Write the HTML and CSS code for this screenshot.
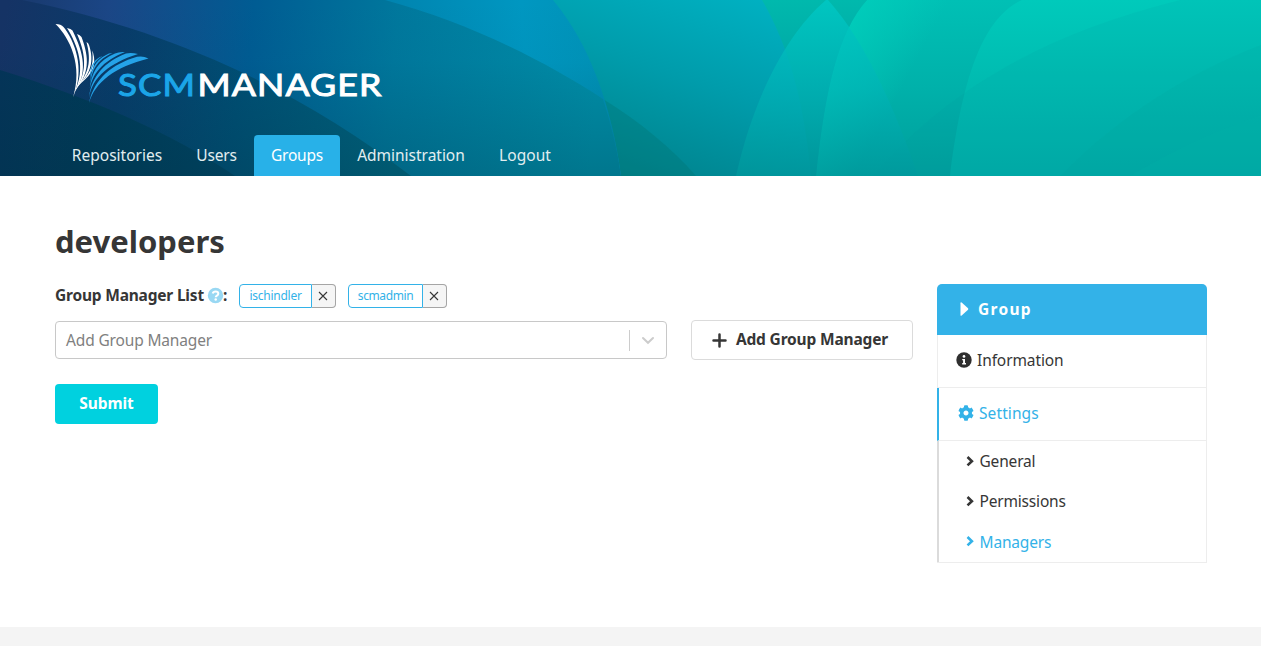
FILE: index.html
```html
<!DOCTYPE html>
<html lang="en">
<head>
<meta charset="utf-8">
<title>SCM-Manager - developers</title>
<link rel="stylesheet" href="styles.css">
</head>
<body>
<header class="hero">
  <svg class="hero-art" viewBox="0 0 1261 176" preserveAspectRatio="none" aria-hidden="true">
    <defs>
      <linearGradient id="g-right" x1="0" y1="0" x2="0" y2="1"><stop offset="0" stop-color="#00cabb"/><stop offset=".5" stop-color="#00bab0"/><stop offset="1" stop-color="#00aba7"/></linearGradient>
      <linearGradient id="g-h" x1="0" y1="0" x2="0" y2="1"><stop offset="0" stop-color="#00c0b5"/><stop offset=".5" stop-color="#00b1aa"/><stop offset="1" stop-color="#009e9c"/></linearGradient>
      <linearGradient id="g-hl" gradientUnits="userSpaceOnUse" x1="860" y1="10" x2="925" y2="45"><stop offset="0" stop-color="#00d0bc" stop-opacity=".7"/><stop offset="1" stop-color="#00d0bc" stop-opacity="0"/></linearGradient>
      <linearGradient id="g-g" x1="0" y1="0" x2="0" y2="1"><stop offset="0" stop-color="#00b9ad"/><stop offset=".5" stop-color="#00a3a4"/><stop offset="1" stop-color="#008b92"/></linearGradient>
      <linearGradient id="g-e" gradientUnits="userSpaceOnUse" x1="740" y1="-20" x2="670" y2="190"><stop offset="0" stop-color="#00b3c4"/><stop offset=".5" stop-color="#009cab"/><stop offset="1" stop-color="#00828c"/></linearGradient>
      <linearGradient id="g-f" x1="0" y1="0" x2="0" y2="1"><stop offset="0" stop-color="#00c8c4" stop-opacity=".85"/><stop offset=".5" stop-color="#00b4b7" stop-opacity=".65"/><stop offset="1" stop-color="#00999d" stop-opacity=".7"/></linearGradient>
      <linearGradient id="g-d" gradientUnits="userSpaceOnUse" x1="380" y1="40" x2="600" y2="20"><stop offset="0" stop-color="#0082ae"/><stop offset=".65" stop-color="#0097c1"/><stop offset="1" stop-color="#0093b8"/></linearGradient>
      <linearGradient id="g-band" gradientUnits="userSpaceOnUse" x1="0" y1="0" x2="600" y2="60"><stop offset="0" stop-color="#183769"/><stop offset=".18" stop-color="#1b4686"/><stop offset=".42" stop-color="#005c93"/><stop offset=".66" stop-color="#00789d"/><stop offset="1" stop-color="#008fa9"/></linearGradient>
      <linearGradient id="g-a" gradientUnits="userSpaceOnUse" x1="0" y1="50" x2="400" y2="110"><stop offset="0" stop-color="#153365"/><stop offset=".3" stop-color="#083c6a"/><stop offset=".6" stop-color="#004f75"/><stop offset="1" stop-color="#00657f"/></linearGradient>
      <linearGradient id="g-b" gradientUnits="userSpaceOnUse" x1="0" y1="120" x2="230" y2="120"><stop offset="0" stop-color="#043459"/><stop offset=".4" stop-color="#003a58"/><stop offset="1" stop-color="#004464"/></linearGradient>
      <linearGradient id="g-dark" x1="0" y1="0" x2="0" y2="1"><stop offset="0" stop-color="#003544" stop-opacity="0"/><stop offset=".35" stop-color="#003544" stop-opacity=".03"/><stop offset="1" stop-color="#003544" stop-opacity=".27"/></linearGradient>
    </defs>
    <rect width="1261" height="176" fill="url(#g-right)"/>
    <path d="M1261 45C1190 72 1120 115 1060 176H1261Z" fill="#009a97" opacity=".1"/>
    <path d="M1261 115Q1190 140 1130 176H1261Z" fill="#00c0b0" opacity=".12"/>
    <path d="M1022 0C982 18 962 80 950 176H0V0Z" fill="url(#g-h)"/>
    <path d="M1180 0C1040 35 945 92 873 176H1261V0Z" fill="#00959a" opacity=".1"/>
    <path d="M867 0C838 32 825 90 816 176H1000V0Z" fill="url(#g-hl)"/>
    <path d="M867 0C838 32 825 90 816 176H0V0Z" fill="url(#g-g)"/>
    <path d="M762 0C790 48 804 104 811 176H0V0Z" fill="url(#g-e)"/>
    <path d="M826 0C785 35 753 100 736 176H918C896 112 866 42 828 0Z" fill="url(#g-f)"/>
    <path d="M603 99C640 122 672 148 696 176H610Z" fill="#00706e" opacity=".3"/>
    <path d="M553 0C590 44 612 108 621 176H0V0Z" fill="url(#g-d)"/>
    <path d="M0 0H385C466 22 540 58 603 99Q616 140 621 176H0Z" fill="url(#g-band)"/>
    <path d="M0 0H22C170 30 300 90 411 176H0Z" fill="url(#g-a)"/>
    <path d="M0 70C90 98 170 132 235 176H0Z" fill="url(#g-b)"/>
    <path d="M0 0H553C590 44 612 108 621 176H0Z" fill="url(#g-dark)"/>
  </svg>
  <div class="hero-inner">
    <svg class="logo" width="330" height="84" viewBox="54 21 330 84" role="img" aria-label="SCM-Manager">
      <g fill="#fff">
        <path d="M55.500 24Q61 24 63.500 27C74 40 86 68 73 97.500C83 66 70 38 55.500 24Z"/>
        <path d="M67 28Q71 28.500 72.500 30.500C80 46 91 70 74 93C87 68 77 44 67 28Z"/>
        <path d="M77 34Q80 35 81.500 37C87 52 92.500 71 75 90.500C89.500 70 84 50 77 34Z"/>
        <path d="M86.500 42Q88.500 43 89 45C92.500 56 95 71 76 88C92 71 90 56 86.500 42Z"/>
        <path d="M92.200 50.500Q93.500 53 94 57C95 66 93 75 77 86C93 73 93.500 62 92.200 50.500Z"/>
      </g>
      <g fill="#25a3e8">
        <path d="M89 103C95 82 115 67 148.500 58.500Q143 55.500 137 56.800C112 64 94 79 89 103Z"/>
        <path d="M89 98C92 77 110 63 138 54Q131 52.200 126 53.500C106 61 91 76 89 98Z"/>
        <path d="M89.500 92C91 74 103 61 125 52Q119 51.500 115 53.500C99 60 90.500 72 89.500 92Z"/>
        <path d="M90.500 86C91 70 97 60 112.500 53Q108.500 53 106 55C95 61 90 69 90.500 86Z"/>
        <path d="M90.500 79C90.500 68 94.500 61 102.500 56Q99 57 97 59C92 63 89.500 69 90.500 79Z"/>
      </g>
      <text class="logo-text logo-scm" x="118" y="96" textLength="78" lengthAdjust="spacingAndGlyphs">SCM</text>
      <text class="logo-text" x="197.500" y="96" textLength="185" lengthAdjust="spacingAndGlyphs">MANAGER</text>
    </svg>
    <nav class="tabs">
      <a class="tab t-repos">Repositories</a>
      <a class="tab t-users">Users</a>
      <a class="tab t-groups is-active">Groups</a>
      <a class="tab t-admin">Administration</a>
      <a class="tab t-logout">Logout</a>
    </nav>
  </div>
</header>
<main class="page">
  <h1 class="title">developers</h1>
  <div class="columns">
    <section class="main">
      <div class="managers">
        <span class="label">Group Manager List</span>
        <svg class="help" width="16" height="16" viewBox="0 0 16 16"><circle cx="7.500" cy="7.500" r="7.700" fill="#99d8f3"/><path d="M4.700 5.600C5.100 4.100 6.100 3.500 7.500 3.500C9.100 3.500 10.300 4.500 10.300 5.800C10.300 7.600 7.700 7.600 7.700 9.200" fill="none" stroke="#fff" stroke-width="2"/><circle cx="7.700" cy="11.500" r="1.250" fill="#fff"/></svg>
        <span class="colon">:</span>
        <span class="tag tag-first"><span class="tag-name n1">ischindler</span><span class="tag-x"><svg width="10" height="10" viewBox="0 0 10 10"><path d="M1 1L9 9M9 1L1 9" stroke="#363636" stroke-width="1.100"/></svg></span></span>
        <span class="tag"><span class="tag-name n2">scmadmin</span><span class="tag-x"><svg width="10" height="10" viewBox="0 0 10 10"><path d="M1 1L9 9M9 1L1 9" stroke="#363636" stroke-width="1.100"/></svg></span></span>
      </div>
      <div class="add-row">
        <div class="select"><span class="placeholder">Add Group Manager</span><span class="select-arrow"><svg width="14" height="9" viewBox="0 0 14 9"><path d="M2 2L7 6.800L12 2" fill="none" stroke="#ccc" stroke-width="2" stroke-linecap="round"/></svg></span></div>
        <button class="button"><svg width="15" height="15" viewBox="0 0 15 15"><path d="M7.500 1.500V13.500M1.500 7.500H13.500" stroke="#363636" stroke-width="2.500" stroke-linecap="round"/></svg><span>Add Group Manager</span></button>
      </div>
      <button class="submit">Submit</button>
    </section>
    <aside class="menu">
      <div class="menu-head"><svg width="9" height="14" viewBox="0 0 9 14"><path d="M.5 1.200Q.5-.4 1.700.6L8 6.300Q8.600 7 8 7.700L1.700 13.400Q.5 14.300.5 12.900Z" fill="#fff"/></svg><span>Group</span></div>
      <a class="item info"><svg width="16" height="16" viewBox="0 0 16 16"><circle cx="8" cy="8" r="7.700" fill="#2f2f2f"/><circle cx="8" cy="4.400" r="1.350" fill="#fff"/><path d="M6.200 6.900H9V11H10V12.400H6.200V11H7.100V8.200H6.200Z" fill="#fff"/></svg><span>Information</span></a>
      <a class="item settings"><svg width="16" height="16" viewBox="0 0 512 512"><path fill="#33b2e8" d="M487.400 315.700l-42.600-24.600c4.300-23.200 4.300-47 0-70.200l42.600-24.600c4.900-2.800 7.100-8.600 5.500-14-11.100-35.600-30-67.800-54.700-94.600-3.800-4.100-10-5.100-14.800-2.300L380.800 110c-17.900-15.400-38.500-27.300-60.800-35.100V25.800c0-5.600-3.900-10.500-9.400-11.700-36.700-8.200-74.300-7.800-109.200 0-5.500 1.200-9.400 6.100-9.400 11.700V75c-22.200 7.900-42.800 19.800-60.800 35.100L88.700 85.500c-4.900-2.800-11-1.900-14.800 2.300-24.700 26.700-43.600 58.900-54.700 94.600-1.700 5.400.6 11.200 5.500 14L67.300 221c-4.300 23.200-4.300 47 0 70.200l-42.600 24.600c-4.900 2.800-7.100 8.600-5.500 14 11.100 35.600 30 67.800 54.700 94.600 3.800 4.100 10 5.100 14.800 2.300l42.600-24.600c17.900 15.400 38.500 27.300 60.800 35.100v49.200c0 5.600 3.900 10.500 9.400 11.700 36.700 8.200 74.300 7.800 109.200 0 5.500-1.200 9.400-6.100 9.400-11.700v-49.200c22.200-7.900 42.800-19.800 60.800-35.100l42.600 24.600c4.900 2.800 11 1.900 14.800-2.300 24.700-26.700 43.600-58.900 54.700-94.600 1.500-5.500-.7-11.300-5.600-14.100zM256 336c-44.100 0-80-35.900-80-80s35.900-80 80-80 80 35.900 80 80-35.900 80-80 80z"/></svg><span>Settings</span></a>
      <div class="submenu">
        <a class="sub s-general"><svg width="9" height="11" viewBox="0 0 9 11"><path d="M2.500 1L6.900 5.200L2.500 9.400" fill="none" stroke="currentColor" stroke-width="2.600"/></svg><span>General</span></a>
        <a class="sub s-perm"><svg width="9" height="11" viewBox="0 0 9 11"><path d="M2.500 1L6.900 5.200L2.500 9.400" fill="none" stroke="currentColor" stroke-width="2.600"/></svg><span>Permissions</span></a>
        <a class="sub s-man is-current"><svg width="9" height="11" viewBox="0 0 9 11"><path d="M2.500 1L6.900 5.200L2.500 9.400" fill="none" stroke="currentColor" stroke-width="2.600"/></svg><span>Managers</span></a>
      </div>
    </aside>
  </div>
</main>
<footer class="footer"></footer>
</body>
</html>
```
FILE: styles.css
```css
* { box-sizing: border-box; }
html, body { height: 100%; }
body {
  margin: 0;
  display: flex;
  flex-direction: column;
  overflow: hidden;
  background: #fff;
  color: #363636;
  font-family: "Noto Sans", "Open Sans", sans-serif;
  font-size: 15.5px;
  line-height: 24px;
}
svg { display: block; flex: none; overflow: visible; }
button { font-family: inherit; font-weight: 700; padding: 0; }

.hero { position: relative; height: 176px; flex: none; }
.hero-art { position: absolute; inset: 0; width: 100%; height: 100%; overflow: hidden; }
.hero-inner {
  position: relative;
  height: 100%;
  padding: 21px 54px 0;
  display: flex;
  flex-direction: column;
  justify-content: space-between;
}
.logo-text { font-family: Lato, sans-serif; font-weight: 400; font-size: 31.5px; letter-spacing: 1px; fill: #fff; stroke: #fff; stroke-width: 1px; }
.logo-scm { fill: #1ba5e8; stroke: #1ba5e8; }

.tabs { display: flex; padding-left: 1px; }
.tab { height: 41px; line-height: 40px; text-align: center; color: #e2eef0; white-space: nowrap; }
.t-repos { width: 124px; letter-spacing: 0; }
.t-users { width: 75px; letter-spacing: -.2px; }
.t-groups { width: 86px; letter-spacing: -.2px; }
.t-admin { width: 142px; letter-spacing: -.02px; }
.t-logout { width: 86px; letter-spacing: .05px; }
.is-active { background: #28b1e8; color: #fff; border-radius: 4px 4px 0 0; }

.page { height: 451px; flex: none; padding: 47px 54px 0 55px; }
.title { margin: 0; height: 36px; font-size: 31px; line-height: 36px; font-weight: 700; letter-spacing: 0; }
.columns { display: flex; justify-content: space-between; margin-top: 25px; }
.main { width: 858px; }

.managers { display: flex; align-items: center; height: 24px; font-weight: 700; white-space: nowrap; }
.label { width: 153px; letter-spacing: -.2px; padding-bottom: 2px; }
.colon { width: 6px; padding-bottom: 2px; margin-left: -1px; margin-right: 1px; }
.tag { display: flex; height: 24px; margin-left: 12px; font-size: 12px; line-height: 22px; font-weight: 400; }
.tag-first { margin-left: 9px; }
.tag-name { border: 1px solid #33b2e8; border-radius: 4px 0 0 4px; color: #33b2e8; text-align: center; letter-spacing: -.25px; }
.n1 { width: 73px; }
.n2 { width: 75px; letter-spacing: -.4px; }
.tag-x { width: 24px; padding-right: 1px; display: grid; place-items: center; background: #f5f5f5; border: 1px solid #a5a5a5; border-left: 0; border-radius: 0 4px 4px 0; }

.add-row { display: flex; align-items: center; justify-content: space-between; height: 40px; margin-top: 12px; }
.select { width: 612px; height: 38px; display: flex; align-items: center; justify-content: space-between; border: 1px solid #c8c8c8; border-radius: 4px; padding-left: 10px; }
.placeholder { color: #808080; letter-spacing: -.15px; }
.select-arrow { width: 37px; height: 21px; display: grid; place-items: center; border-left: 1px solid #ccc; }
.button { width: 222px; height: 40px; display: flex; align-items: center; justify-content: center; gap: 9px; padding-right: 4px; border: 1px solid #dbdbdb; border-radius: 4px; background: #fff; color: #363636; font-size: 15.5px; letter-spacing: -.17px; white-space: nowrap; }
.button span { padding-bottom: 2px; }
.submit { display: block; width: 103px; height: 40px; margin-top: 24px; padding-bottom: 2px; border: 0; border-radius: 4px; background: #00d1df; color: #fff; font-size: 15.5px; letter-spacing: -.1px; }

.menu { width: 270px; height: 279px; border: 1px solid #ededed; border-top: 0; border-radius: 5px 5px 0 0; }
.menu-head { height: 51px; margin: 0 -1px; padding-left: 23px; display: flex; align-items: center; gap: 9px; border-radius: 5px 5px 0 0; background: #33b2e8; color: #fff; font-weight: 700; letter-spacing: 1.3px; }
.menu-head span, .item span { padding-bottom: 2px; }
.menu-head svg, .item svg { margin-bottom: 1px; }
.item { height: 53px; display: flex; align-items: center; padding-bottom: 1px; border-bottom: 1px solid #ededed; }
.info { padding-left: 17.500px; gap: 5.500px; letter-spacing: -.1px; }
.settings { margin-left: -1px; padding-left: 18.500px; gap: 5.500px; border-left: 2px solid #33b2e8; color: #33b2e8; letter-spacing: .1px; }
.submenu { margin-left: -1px; height: 121px; border-left: 2px solid #dbdbdb; display: grid; grid-template-rows: 40px 40px 41px; }
.sub { display: flex; align-items: center; padding-left: 26px; gap: 5.500px; letter-spacing: -.18px; }
.is-current { color: #33b2e8; }

.footer { flex: 1; background: #f4f4f4; }
```
